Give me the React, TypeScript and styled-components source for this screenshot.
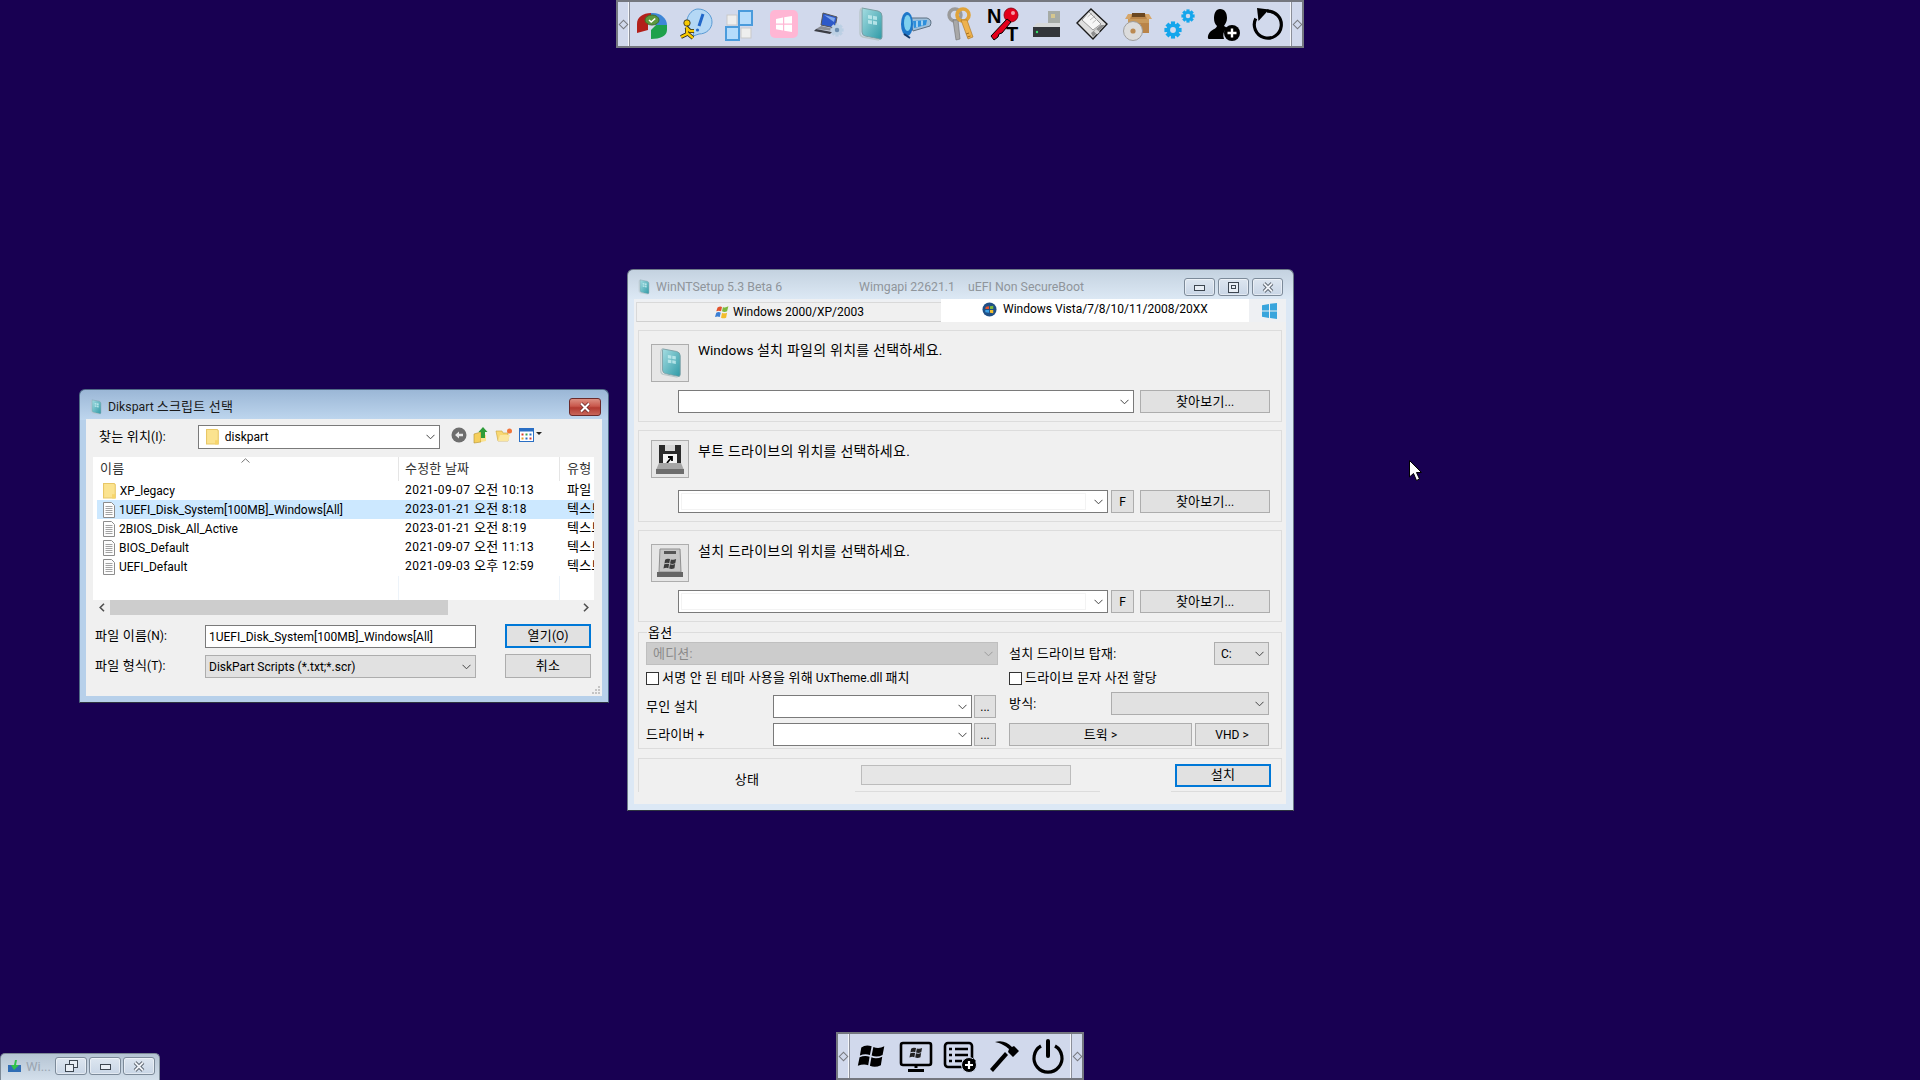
import * as React from "react";
import styled, { createGlobalStyle } from "styled-components";

const GlobalStyle = createGlobalStyle`
  html, body {
    margin: 0;
    padding: 0;
    background: #180052;
  }
  body {
    font-family: Roboto, "Noto Sans CJK KR", sans-serif;
    font-size: 12px;
    color: #000;
  }
  * {
    box-sizing: border-box;
  }
`;

const Desktop = styled.div`
  position: relative;
  width: 1920px;
  height: 1080px;
  overflow: hidden;
  background: #180052;
`;

// hangul runs sit a little larger than the latin around them
const Hangul = styled.span`
  font-size: 13px;
  letter-spacing: 0.2px;
  line-height: 1;
`;

const Txt = ({ children }: { children: string }) => (
  <span>
    {children.split(/([\uAC00-\uD7A3]+(?:\s+[\uAC00-\uD7A3]+)*)/).map((part, i) =>
      i % 2 === 1 ? <Hangul key={i}>{part}</Hangul> : part
    )}
  </span>
);

/* ---------- floating toolbars ---------- */

const Bar = styled.div<{ $x: number; $y: number; $w: number }>`
  position: absolute;
  left: ${(p) => p.$x}px;
  top: ${(p) => p.$y}px;
  width: ${(p) => p.$w}px;
  height: 48px;
  display: flex;
  align-items: center;
  background: #d1d9ec;
  border: 2px solid #74777f;
`;

const Grip = styled.div`
  width: 10px;
  height: 100%;
  flex: none;
  display: flex;
  align-items: center;
  justify-content: center;
  &::before {
    content: "";
    width: 5px;
    height: 5px;
    border: 1px solid #77797f;
    transform: rotate(45deg);
  }
`;

const GripLine = styled.div`
  width: 2px;
  height: 100%;
  flex: none;
  background: linear-gradient(90deg, #f4f6fb 50%, #8b8f99 50%);
`;

const BarIcons = styled.div`
  flex: 1;
  display: flex;
  align-items: center;
  justify-content: center;
  gap: 8px;
  position: relative;
`;

const BarIcon = styled.svg`
  width: 36px;
  height: 36px;
  flex: none;
  display: block;
`;

const MenuArrow = styled.span`
  position: absolute;
  left: 123px;
  top: 20px;
  width: 0;
  height: 0;
  border-left: 3px solid #000;
  border-top: 3px solid transparent;
  border-bottom: 3px solid transparent;
`;

/* ---------- windows ---------- */

const Frame = styled.div<{ $active?: boolean }>`
  position: absolute;
  display: flex;
  flex-direction: column;
  padding: 0 6px 6px;
  border-radius: 6px 6px 0 0;
  border: 1px solid ${(p) => (p.$active ? "#4f6a86" : "#6d7a88")};
  border-bottom-color: #2e3440;
  background: ${(p) =>
    p.$active
      ? "linear-gradient(180deg, #9bb7d6 0, #bed6ee 30px, #b7d0ea 30px)"
      : "linear-gradient(180deg, #c4d2e0 0, #dde9f5 30px, #dce8f5 30px)"};
`;

const DialogFrame = styled(Frame)`
  left: 79px;
  top: 389px;
  width: 530px;
  height: 314px;
`;

const SetupFrame = styled(Frame)`
  left: 627px;
  top: 269px;
  width: 667px;
  height: 542px;
  padding-right: 7px;
`;

const TitleBar = styled.div`
  height: 29px;
  flex: none;
  display: flex;
  align-items: center;
  gap: 6px;
  padding: 5px 0 0 4px;
  position: relative;
`;

const TitleIcon = styled.svg`
  width: 12px;
  height: 16px;
  flex: none;
`;

const TitleText = styled.span<{ $dim?: boolean; $gap?: number }>`
  font-size: 12.3px;
  white-space: nowrap;
  color: ${(p) => (p.$dim ? "#8f959b" : "#1a1a1a")};
  margin-left: ${(p) => p.$gap ?? 0}px;
`;

const CaptionGroup = styled.div`
  margin-left: auto;
  margin-right: 3px;
  display: flex;
  gap: 3px;
`;

const Caption = styled.div<{ $w: number }>`
  width: ${(p) => p.$w}px;
  height: 18px;
  display: flex;
  align-items: center;
  justify-content: center;
  border: 1px solid #7c8a99;
  border-radius: 3px;
  background: linear-gradient(180deg, #dde6f0, #c9d6e6);
  box-shadow: inset 0 0 0 1px rgba(255, 255, 255, 0.45);
`;

const CloseCaption = styled.div`
  width: 32px;
  height: 18px;
  margin-left: auto;
  margin-right: 1px;
  display: flex;
  align-items: center;
  justify-content: center;
  border: 1px solid #6b2a2a;
  border-radius: 3px;
  background: linear-gradient(180deg, #dc8f82 0, #c9584c 45%, #b23a30 55%, #c8665a 100%);
`;

const Client = styled.div`
  flex: 1;
  display: flex;
  flex-direction: column;
  background: #f0f0f0;
  position: relative;
  min-height: 0;
`;

/* ---------- shared controls ---------- */

const Btn = styled.div<{ $w?: number; $primary?: boolean }>`
  ${(p) => (p.$w ? `width: ${p.$w}px;` : "flex: 1;")}
  height: 23px;
  flex-shrink: 0;
  display: flex;
  align-items: center;
  justify-content: center;
  background: #e1e1e1;
  border: ${(p) => (p.$primary ? "2px solid #0078d7" : "1px solid #adadad")};
  white-space: nowrap;
`;

const ComboBox = styled.div<{ $w?: number; $tone?: "white" | "gray" | "off" }>`
  ${(p) => (p.$w ? `width: ${p.$w}px; flex: none;` : "flex: 1;")}
  height: 23px;
  display: flex;
  align-items: center;
  padding: 0 4px 0 6px;
  white-space: nowrap;
  background: ${(p) =>
    p.$tone === "off" ? "#cccccc" : p.$tone === "gray" ? "#e1e1e1" : "#ffffff"};
  border: 1px solid
    ${(p) => (p.$tone === "off" ? "#bfbfbf" : p.$tone === "gray" ? "#adadad" : "#7a7a7a")};
  color: ${(p) => (p.$tone === "off" ? "#8a8a8a" : "#000")};
`;

const ComboInset = styled.div`
  flex: 1;
  align-self: stretch;
  margin: 2px 8px 2px -4px;
  border: 1px solid #f3f3f3;
`;

const ComboLabel = styled.span`
  flex: 1;
  display: flex;
  align-items: center;
  gap: 6px;
`;

const ChevronSvg = styled.svg<{ $faint?: boolean }>`
  width: 9px;
  height: 6px;
  flex: none;
  margin-left: auto;
  opacity: ${(p) => (p.$faint ? 0.35 : 1)};
`;

const Chevron = ({ faint }: { faint?: boolean }) => (
  <ChevronSvg $faint={faint} viewBox="0 0 9 6">
    <path d="M.5 .8 4.500 4.800 8.500 .8" fill="none" stroke="#444" strokeWidth="1" />
  </ChevronSvg>
);

const FolderGlyph = ({ size = 16 }: { size?: number }) => (
  <svg width={size * 0.8} height={size} viewBox="0 0 12 15" style={{ flex: "none" }}>
    <path d="M.5 .5h10l1 1v12.500h-11z" fill="#fbe38f" stroke="#e8c766" />
    <path d="M8.500 10.500h3v4h-3z" fill="#f7d56a" />
  </svg>
);

const DocGlyph = () => (
  <svg width="12" height="16" viewBox="0 0 12 16" style={{ flex: "none" }}>
    <path d="M.5 .5h8l3 3v12h-11z" fill="#fdfdfd" stroke="#8c8c8c" />
    <path d="M2.500 4.500h7M2.500 6.500h7M2.500 8.500h7M2.500 10.500h7M2.500 12.500h7" stroke="#a3a3a3" />
  </svg>
);

/* ---------- file dialog ---------- */

const LookInRow = styled.div`
  display: flex;
  align-items: center;
  height: 24px;
  margin-top: 6px;
  padding-left: 13px;
`;

const LookInLabel = styled.span`
  width: 99px;
  flex: none;
`;

const DirCombo = styled(ComboBox)`
  width: 242px;
  height: 24px;
  flex: none;
  padding-left: 7px;
`;

const ToolStrip = styled.div`
  display: flex;
  align-items: center;
  gap: 6px;
  margin: -4px 0 0 11px;
`;

const FileList = styled.div`
  height: 158px;
  margin: 8px 8px 0 7px;
  background: #fff;
  display: flex;
  flex-direction: column;
  position: relative;
  overflow: hidden;
`;

const Columns = "306px 161px 34px";

const HeaderRow = styled.div`
  display: grid;
  grid-template-columns: ${Columns};
  height: 24px;
  flex: none;
`;

const HeadCell = styled.div<{ $pad: number; $last?: boolean }>`
  display: flex;
  align-items: center;
  padding: 0 0 1px ${(p) => p.$pad}px;
  border-right: ${(p) => (p.$last ? "none" : "1px solid #e5e5e5")};
  white-space: nowrap;
  overflow: hidden;
  color: #333;
`;

const SortCaret = styled.svg`
  position: absolute;
  left: 148px;
  top: 1px;
  width: 9px;
  height: 5px;
`;

const FileRow = styled.div<{ $selected?: boolean }>`
  display: grid;
  grid-template-columns: 302px 161px 34px;
  margin-left: 4px;
  height: 19px;
  flex: none;
  background: ${(p) => (p.$selected ? "#cce8ff" : "transparent")};
`;

const NameCell = styled.div`
  display: flex;
  align-items: center;
  gap: 4px;
  padding-left: 6px;
  white-space: nowrap;
`;

const DateCell = styled.div`
  padding-left: 6px;
  line-height: 19px;
  letter-spacing: 0.5px;
  white-space: nowrap;
`;

const TypeCell = styled.div`
  padding-left: 7px;
  line-height: 19px;
  white-space: nowrap;
  overflow: hidden;
`;

const ListFiller = styled.div`
  flex: 1;
  display: grid;
  grid-template-columns: ${Columns};
  & > div {
    border-right: 1px solid #edf3f9;
  }
`;

const ScrollBar = styled.div`
  height: 15px;
  flex: none;
  display: flex;
  align-items: center;
  background: #f0f0f0;
`;

const ScrollArrow = styled.div`
  width: 17px;
  flex: none;
  display: flex;
  justify-content: center;
`;

const ScrollTrack = styled.div`
  flex: 1;
  align-self: stretch;
`;

const ScrollThumb = styled.div`
  width: 338px;
  height: 100%;
  background: #cdcdcd;
`;

const FileForm = styled.div`
  display: grid;
  grid-template-columns: 110px 271px 29px 86px;
  grid-auto-rows: 24px;
  row-gap: 6px;
  align-items: end;
  margin-top: 9px;
  padding-left: 9px;
`;

const FormLabel = styled.span`
  align-self: center;
`;

const FormField = styled(ComboBox)`
  width: 271px;
  padding: 0 4px 0 3px;
`;

const FormBtn = styled(Btn)`
  grid-column: 4;
  height: 24px;
`;

const ResizeGrip = styled.svg`
  position: absolute;
  right: 2px;
  bottom: 2px;
  width: 8px;
  height: 8px;
`;

/* ---------- setup window ---------- */

const TabStrip = styled.div`
  height: 23px;
  flex: none;
  display: flex;
  align-items: flex-end;
  padding-left: 2px;
  background: #eef0f3;
`;

const InactiveTab = styled.div`
  width: 305px;
  height: 20px;
  display: flex;
  align-items: center;
  gap: 4px;
  padding-left: 78px;
  background: #f0f0f0;
  border: 1px solid #d9d9d9;
  border-bottom-color: #d0d0d0;
  border-right: none;
`;

const ActiveTab = styled.div`
  width: 308px;
  height: 23px;
  display: flex;
  align-items: flex-start;
  gap: 6px;
  padding: 3px 0 0 41px;
  background: #fff;
`;

const TabEnd = styled.div`
  margin-left: 13px;
  align-self: center;
  display: flex;
`;

const Panel = styled.div`
  flex: 1;
  display: flex;
  flex-direction: column;
  gap: 8px;
  padding: 8px 4px 0;
`;

const SourceGroup = styled.section<{ $iconTop: number }>`
  height: 92px;
  flex: none;
  display: flex;
  flex-direction: column;
  padding: ${(p) => p.$iconTop - 1}px 11px 8px 12px;
  border: 1px solid #dcdcdc;
`;

const SourceHead = styled.div`
  display: flex;
  gap: 9px;
`;

const IconBox = styled.div`
  width: 38px;
  height: 38px;
  flex: none;
  display: flex;
  align-items: center;
  justify-content: center;
  background: #e6e6e6;
  border: 1px solid #adadad;
`;

const SourceText = styled.div<{ $top: number }>`
  margin-top: ${(p) => p.$top}px;
  font-size: 13.6px;
  line-height: 14px;
  white-space: nowrap;
  ${Hangul} {
    font-size: 14px;
    letter-spacing: 0.25px;
  }
`;

const FieldRow = styled.div`
  margin-top: auto;
  padding-left: 27px;
  display: flex;
`;

const LetterBtn = styled(Btn)`
  margin-left: 3px;
`;

const BrowseBtn = styled(Btn)`
  margin-left: 6px;
`;

const OptionsGroup = styled.section`
  margin-top: 2px;
  height: 117px;
  flex: none;
  position: relative;
  display: grid;
  grid-template-columns: 352px 260px;
  column-gap: 11px;
  padding: 9px 0 0 7px;
  border: 1px solid #dcdcdc;
`;

const Legend = styled.span`
  position: absolute;
  left: 8px;
  top: -8px;
  padding: 0 1px;
  line-height: 16px;
  background: #f0f0f0;
`;

const OptionsColumn = styled.div`
  display: flex;
  flex-direction: column;
`;

const CheckRow = styled.label<{ $h: number; $mb: number }>`
  height: ${(p) => p.$h}px;
  margin-bottom: ${(p) => p.$mb}px;
  flex: none;
  display: flex;
  align-items: center;
  gap: 3px;
  white-space: nowrap;
`;

const CheckSquare = styled.span`
  width: 13px;
  height: 13px;
  flex: none;
  background: #fff;
  border: 1px solid #333;
`;

const OptionRow = styled.div<{ $mt?: number }>`
  display: flex;
  align-items: center;
  flex: none;
  height: 23px;
  margin-top: ${(p) => p.$mt ?? 0}px;
`;

const RowLabel = styled.span<{ $w?: number }>`
  ${(p) => (p.$w ? `width: ${p.$w}px; flex: none;` : "flex: 1;")}
  white-space: nowrap;
`;

const DotsBtn = styled(Btn)`
  margin-left: 2px;
  align-items: flex-end;
  padding-bottom: 3px;
`;

const SplitBtns = styled.div`
  flex: 1;
  display: flex;
  gap: 3px;
`;

const StatusGroup = styled.section`
  margin-top: 1px;
  height: 34px;
  flex: none;
  display: flex;
  border-top: 1px solid #dcdcdc;
  border-left: 1px solid #dcdcdc;
  border-right: 1px solid #dcdcdc;
`;

const StatusCell = styled.div<{ $w: number; $line?: boolean }>`
  width: ${(p) => p.$w}px;
  flex: none;
  display: flex;
  align-items: center;
  justify-content: center;
  border-bottom: ${(p) => (p.$line ? "1px solid #dcdcdc" : "none")};
`;

const StatusLabel = styled.span`
  margin-top: 9px;
`;

const ProgressTrack = styled.div`
  width: 210px;
  height: 20px;
  margin: 0 0 0 -24px;
  background: #e6e6e6;
  border: 1px solid #bcbcbc;
`;

const InstallCell = styled(StatusCell)`
  justify-content: flex-start;
  padding-left: 4px;
`;

/* ---------- mini taskbar window and pointer ---------- */

const MiniWindow = styled.div`
  position: absolute;
  left: 0;
  top: 1053px;
  width: 160px;
  height: 27px;
  display: flex;
  align-items: center;
  padding: 0 4px 2px 7px;
  border-radius: 5px 5px 0 0;
  border: 1px solid #7d8a97;
  border-bottom: none;
  background: linear-gradient(180deg, #b5c4d3, #d3dfeb);
`;

const MiniTitle = styled.span`
  margin-left: 5px;
  color: #9aa5b1;
  font-size: 13px;
`;

const MiniCaptions = styled.div`
  margin-left: auto;
  display: flex;
  gap: 2px;
`;

const Pointer = styled.svg`
  position: absolute;
  left: 1409px;
  top: 460px;
  width: 14px;
  height: 22px;
`;

/* ---------- drawings ---------- */

const Gear = ({ cx, cy, r, fill, hole }: { cx: number; cy: number; r: number; fill: string; hole: string }) => (
  <g>
    {[0, 45, 90, 135].map((a) => (
      <rect
        key={a}
        x={cx - r * 0.32}
        y={cy - r * 1.32}
        width={r * 0.64}
        height={r * 2.64}
        fill={fill}
        transform={`rotate(${a} ${cx} ${cy})`}
      />
    ))}
    <circle cx={cx} cy={cy} r={r} fill={fill} />
    <circle cx={cx} cy={cy} r={r * 0.45} fill={hole} />
  </g>
);

const WinFlag = ({ x, y, s, fill }: { x: number; y: number; s: number; fill: string }) => (
  <g transform={`translate(${x} ${y}) scale(${s})`} fill={fill}>
    <path d="M2 3Q6 0 11 2L9.500 9.500Q5 8 .8 10Z" />
    <path d="M12.500 2.500Q17 4.500 22 2L20.500 9.500Q15.500 12 11 10Z" />
    <path d="M.5 11.500Q5 9.500 9.200 11L8 18.500Q4 17 -1 19Z" />
    <path d="M10.800 11.500Q15 13.500 20.200 11L19 18.500Q14 21 9.500 19Z" />
  </g>
);

const BookShape = ({ id }: { id: string }) => (
  <g>
    <defs>
      <linearGradient id={id} x1="0" y1="0" x2="1" y2="1">
        <stop offset="0" stopColor="#a5dde2" />
        <stop offset="1" stopColor="#2f9aa6" />
      </linearGradient>
    </defs>
    <path d="M8 2 24 5Q28 6 28 10V31Q28 34 25 33L11 30Q8 29 8 26Z" fill={`url(#${id})`} stroke="#7a9ea3" />
    <path d="M8 2Q6 3 6 6V27Q6 30 9 31L25 34" fill="none" stroke="#b9c7c9" strokeWidth="1.400" />
    <path d="M14 9l4 .6v3.600l-4-.6zM19 9.800l4 .6V14l-4-.6zM14 14l4 .6v3.600l-4-.6zM19 14.800l4 .6V19l-4-.6z" fill="#c7eef0" opacity=".8" />
  </g>
);

const TOP_ICONS: React.ReactNode[] = [
  <>
    <path d="M17 7C9 7 3 11 3 18V27L14 24V18L17 17Z" fill="#b3201b" />
    <path d="M17 7C26 6 33 12 33 19L22 19 17 17Z" fill="#3e86d6" />
    <path d="M33 19V24C33 30 26 33 17 33V24L22 19Z" fill="#1ea14b" />
    <ellipse cx="18" cy="14" rx="7" ry="5" fill="#5c9a3d" stroke="#3e6e2a" />
    <path d="M15 14l2.200 2 4-3.500" fill="none" stroke="#fff" strokeWidth="1.600" />
  </>,
  <>
    <path d="M20 3C28 3 34 9 34 16C34 23 28 28 21 28L15 30 16 26C11 24 8 19 9 14C10 8 15 3 20 3Z" fill="#b4d8f5" stroke="#5a9bd4" />
    <path d="M25 8 21 20" stroke="#2167c9" strokeWidth="3" />
    <circle cx="19.500" cy="24" r="1.600" fill="#2167c9" />
    <circle cx="9" cy="17" r="3.200" fill="#f8c900" stroke="#222" strokeWidth=".8" />
    <path d="M8 21 12 25 16 25M9 22 9 28 3 31M9 27 15 32" fill="none" stroke="#222" strokeWidth="4" />
    <path d="M8 21 12 25 16 25M9 22 9 28 3 31M9 27 15 32" fill="none" stroke="#f8c900" strokeWidth="2.400" />
  </>,
  <>
    <rect x="5" y="9" width="10" height="10" fill="#eeeeee" stroke="#c9c9c9" />
    <rect x="17" y="5" width="13" height="14" fill="#b6dcfb" stroke="#4a9bdc" strokeWidth="2" />
    <rect x="4" y="21" width="13" height="13" fill="#b6dcfb" stroke="#4a9bdc" strokeWidth="2" />
    <rect x="19" y="22" width="10" height="10" fill="#eeeeee" stroke="#c9c9c9" />
  </>,
  <>
    <rect x="4" y="4" width="28" height="28" rx="5" fill="#ffb6d4" />
    <path d="M10 13 17 11.500V17.500H10ZM18.200 11.300 26 10V17.500H18.200ZM10 18.700H17V24.500L10 23.200ZM18.200 18.700H26V26L18.200 24.800Z" fill="#fff" />
  </>,
  <>
    <path d="M13 7 27 11 25 22 11 19Z" fill="#2d59c9" stroke="#555" />
    <path d="M14 9 25 12 24 16Z" fill="#7fa7ee" />
    <path d="M11 20 25 23 23 25 6 23Z" fill="#8a8d94" />
    <path d="M6 23 22 26 20 28 4 25Z" fill="#3b3d44" />
    <Gear cx={27} cy={24} r={5} fill="#bcd0e4" hole="#6c8db0" />
  </>,
  <BookShape id="bookTop" />,
  <>
    <path d="M11 12 29 12Q35 14 32 20L15 25Z" fill="#9fc0dc" stroke="#5d6f80" />
    <path d="M15 15 29 14 28 19 16 22Z" fill="#2d8fdc" />
    <path d="M19 15v6M24 14.500v5" stroke="#cfeaf8" strokeWidth="1.400" />
    <ellipse cx="9" cy="18" rx="6" ry="12" fill="#1d77c9" />
    <ellipse cx="9.500" cy="17" rx="3.500" ry="8" fill="#7ed0ee" />
    <path d="M6 28 12 32" stroke="#123a6b" strokeWidth="2" />
  </>,
  <>
    <circle cx="13" cy="9" r="6" fill="none" stroke="#9a9a9a" strokeWidth="3.400" />
    <path d="M11 14 14 34 18 33 16 14Z" fill="#a8a8a8" stroke="#6f6f6f" strokeWidth=".6" />
    <circle cx="21" cy="9" r="6" fill="none" stroke="#e0a33a" strokeWidth="3.600" />
    <path d="M19 14 26 33 31 31 25 14Z" fill="#eeb24d" stroke="#a66f1e" strokeWidth=".6" />
    <path d="M27 27l-3 1M28.500 30l-3 1" stroke="#a66f1e" />
  </>,
  <>
    <text x="1" y="17" fontFamily="Liberation Sans" fontWeight="700" fontSize="20" fill="#000">N</text>
    <text x="20" y="35" fontFamily="Liberation Sans" fontWeight="700" fontSize="20" fill="#000">T</text>
    <circle cx="25" cy="9" r="7" fill="#e3001b" stroke="#7d0010" strokeWidth=".8" />
    <circle cx="27" cy="7" r="2" fill="#f79aa5" />
    <path d="M21 13 5 30 8 34 12 31 13 28 16 27 25 16Z" fill="#e3001b" stroke="#000" strokeWidth="1" />
  </>,
  <>
    <rect x="18" y="5" width="12" height="12" fill="#a6aba6" />
    <rect x="21" y="8" width="4" height="4" fill="#d6c78f" />
    <path d="M7 17H30V21H3Z" fill="#d7d9d9" />
    <rect x="3" y="21" width="27" height="10" fill="#33363a" />
    <circle cx="7" cy="26" r="1.200" fill="#35e26a" />
  </>,
  <>
    <path d="M17 3 33 18 19 33 3 17Z" fill="#dedede" stroke="#1a1a1a" strokeWidth="1.400" />
    <path d="M15 6 27 18 19 24 8 14Z" fill="#f6f6f6" stroke="#9a9a9a" />
    <path d="M13.500 11 18 7M16 14 21 10M18.500 17 23 13" stroke="#bdbdbd" />
    <path d="M27 19 31 19 19 31 17 27Z" fill="#8e8e8e" />
    <path d="M22 23l4 3-3 2.500-3-3z" fill="#d8d8d8" />
  </>,
  <>
    <path d="M10 8H31V27H10Z" fill="#b98449" />
    <path d="M10 8 7 13H12L14 8ZM31 8 34 13H29L27 8Z" fill="#d6a66a" />
    <path d="M14 7H27V11H14Z" fill="#6b4721" />
    <path d="M10 13H31V17H10Z" fill="#c99a5d" />
    <circle cx="15" cy="25" r="9.500" fill="#dcdcdc" stroke="#9f9f9f" />
    <circle cx="15" cy="25" r="2.600" fill="#bb8a52" />
  </>,
  <>
    <Gear cx={11} cy={24} r={6.500} fill="#14a6ec" hole="#d1d9ec" />
    <Gear cx={26} cy={10} r={5} fill="#14a6ec" hole="#d1d9ec" />
  </>,
  <>
    <path d="M14 3C19 3 21 7 21 12C21 16 19 18 18 20C20 21 21 22 21 22A10 10 0 0 0 18 33H3C1 33 2 28 4 26C7 23 10 23 11 20C9 18 8 16 8 12C8 7 10 3 14 3Z" fill="#000" />
    <circle cx="26" cy="27" r="8" fill="#000" />
    <path d="M26 22.500V31.500M21.500 27H30.500" stroke="#fff" strokeWidth="2.400" />
  </>,
  <>
    <path d="M17 5.200A13.500 13.500 0 1 1 5.800 12.500" fill="none" stroke="#000" strokeWidth="3.200" />
    <path d="M7 2 19 3.500 8.500 15Z" fill="#000" />
  </>,
];

const BOTTOM_ICONS: React.ReactNode[] = [
  <WinFlag x={5} y={6} s={1.150} fill="#000" />,
  <>
    <rect x="3" y="5" width="30" height="22" rx="2" fill="none" stroke="#000" strokeWidth="2.600" />
    <WinFlag x={12} y={9} s={0.550} fill="#222" />
    <path d="M18 27V30M10 32.500H26" stroke="#000" strokeWidth="3" />
  </>,
  <>
    <rect x="3" y="5" width="27" height="24" rx="3" fill="none" stroke="#000" strokeWidth="2.600" />
    <path d="M7 11h3M7 17h3M7 23h3M13 11H26M13 17H26M13 23H20" stroke="#000" strokeWidth="2.600" />
    <circle cx="27" cy="27" r="7.500" fill="#000" stroke="#d1d9ec" strokeWidth="1" />
    <path d="M27 23V31M23 27H31" stroke="#fff" strokeWidth="2.200" />
  </>,
  <>
    <path d="M4 31 19 14 22 17 7 34Z" fill="#000" />
    <path d="M9 4C16 2 21 4 26 9L28 8 33 13 27 19 22 14 23 11C20 8 14 5 9 4Z" fill="#000" />
  </>,
  <>
    <path d="M11 8A14 14 0 1 0 25 8" fill="none" stroke="#000" strokeWidth="3.200" />
    <path d="M18 3V18" stroke="#000" strokeWidth="4" strokeLinecap="round" />
  </>,
];

const IconBar = ({ x, y, w, icons, menu }: { x: number; y: number; w: number; icons: React.ReactNode[]; menu?: boolean }) => (
  <Bar $x={x} $y={y} $w={w}>
    <Grip />
    <GripLine />
    <BarIcons>
      {icons.map((icon, i) => (
        <BarIcon key={i} viewBox="0 0 36 36">
          {icon}
        </BarIcon>
      ))}
      {menu && <MenuArrow />}
    </BarIcons>
    <GripLine />
    <Grip />
  </Bar>
);

const AppGlyph = ({ id }: { id: string }) => (
  <TitleIcon viewBox="4 0 26 36">
    <BookShape id={id} />
  </TitleIcon>
);

const FILES = [
  { name: "XP_legacy", date: "2021-09-07 오전 10:13", type: "파일", folder: true },
  { name: "1UEFI_Disk_System[100MB]_Windows[All]", date: "2023-01-21 오전 8:18", type: "텍스트", selected: true },
  { name: "2BIOS_Disk_All_Active", date: "2023-01-21 오전 8:19", type: "텍스트" },
  { name: "BIOS_Default", date: "2021-09-07 오전 11:13", type: "텍스트" },
  { name: "UEFI_Default", date: "2021-09-03 오후 12:59", type: "텍스트" },
];

const MinGlyph = () => (
  <svg width="11" height="7" viewBox="0 0 11 7">
    <rect x=".5" y="1.500" width="10" height="5" fill="#e8eef5" stroke="#3d4650" />
  </svg>
);
const MaxGlyph = () => (
  <svg width="11" height="11" viewBox="0 0 11 11">
    <rect x=".5" y=".5" width="10" height="10" fill="#e8eef5" stroke="#3d4650" />
    <rect x="3.500" y="3.500" width="4" height="3" fill="none" stroke="#3d4650" />
  </svg>
);
const CloseGlyph = ({ light }: { light?: boolean }) => (
  <svg width="12" height="11" viewBox="0 0 12 11">
    <path d="M2 1.500 10 9.500M10 1.500 2 9.500" stroke={light ? "#6b2a2a" : "#3d4650"} strokeWidth="3.600" />
    <path d="M2 1.500 10 9.500M10 1.500 2 9.500" stroke={light ? "#ffffff" : "#eef2f7"} strokeWidth="2" />
  </svg>
);
const RestoreGlyph = () => (
  <svg width="13" height="12" viewBox="0 0 13 12">
    <rect x="4.500" y=".5" width="8" height="7" fill="#e8eef5" stroke="#3d4650" />
    <rect x=".5" y="4.500" width="8" height="7" fill="#e8eef5" stroke="#3d4650" />
  </svg>
);

const SetupRow = ({ children, text, iconTop, labelTop, letter }: { children: React.ReactNode; text: string; iconTop: number; labelTop: number; letter?: boolean }) => (
  <SourceGroup $iconTop={iconTop}>
    <SourceHead>
      <IconBox>{children}</IconBox>
      <SourceText $top={labelTop}>
        <Txt>{text}</Txt>
      </SourceText>
    </SourceHead>
    <FieldRow>
      <ComboBox>
        {letter && <ComboInset />}
        <Chevron />
      </ComboBox>
      {letter && <LetterBtn $w={23}>F</LetterBtn>}
      <BrowseBtn $w={130}>
        <Txt>찾아보기...</Txt>
      </BrowseBtn>
    </FieldRow>
  </SourceGroup>
);

const App = () => (
  <Desktop>
    <GlobalStyle />

    <IconBar x={616} y={0} w={688} icons={TOP_ICONS} />
    <IconBar x={836} y={1032} w={248} icons={BOTTOM_ICONS} menu />

    <DialogFrame $active>
      <TitleBar>
        <AppGlyph id="bookDlg" />
        <TitleText>
          <Txt>Dikspart 스크립트 선택</Txt>
        </TitleText>
        <CloseCaption>
          <CloseGlyph light />
        </CloseCaption>
      </TitleBar>
      <Client>
        <LookInRow>
          <LookInLabel>
            <Txt>찾는 위치(I):</Txt>
          </LookInLabel>
          <DirCombo>
            <ComboLabel>
              <FolderGlyph />
              diskpart
            </ComboLabel>
            <Chevron />
          </DirCombo>
          <ToolStrip>
            <svg width="16" height="16" viewBox="0 0 16 16">
              <circle cx="8" cy="8" r="7.500" fill="#6e6e6e" />
              <path d="M4 8 8 4.500V6.800H12V9.200H8V11.500Z" fill="#e9e9e9" />
            </svg>
            <svg width="16" height="18" viewBox="0 0 16 18">
              <path d="M1 8 8 6V16L1 17Z" fill="#f5cf5d" stroke="#b3912e" strokeWidth=".6" />
              <path d="M8 6 13 9V15L8 16Z" fill="#fbe28f" />
              <path d="M10 1 14.500 6H12V12H8V6H5.500Z" fill="#2f9c3a" />
            </svg>
            <svg width="18" height="16" viewBox="0 0 18 16">
              <path d="M1 4H7L8 6H13V14H3Z" fill="#f8d873" stroke="#c9a33b" strokeWidth=".6" />
              <path d="M3 14 5 8H15L13 14Z" fill="#fbe79f" />
              <circle cx="14.500" cy="4" r="2.500" fill="#f1763a" />
            </svg>
            <svg width="24" height="14" viewBox="0 0 24 14">
              <rect x=".5" y=".5" width="14" height="13" fill="#fff" stroke="#2a6fc4" />
              <rect x=".5" y=".5" width="14" height="3" fill="#2a6fc4" />
              <path d="M2.500 5.500h2v2h-2z" fill="#d93a2b" />
              <path d="M6.500 5.500h2v2h-2z" fill="#3ba24a" />
              <path d="M10.500 5.500h2v2h-2z" fill="#2a6fc4" />
              <path d="M2.500 9.500h2v2h-2z" fill="#e6a21d" />
              <path d="M6.500 9.500h2v2h-2z" fill="#2a6fc4" />
              <path d="M10.500 9.500h2v2h-2z" fill="#d93a2b" />
              <path d="M17 4H23L20 7Z" fill="#222" />
            </svg>
          </ToolStrip>
        </LookInRow>

        <FileList>
          <SortCaret viewBox="0 0 9 5">
            <path d="M.5 4.500 4.500 .8 8.500 4.500" fill="none" stroke="#777" />
          </SortCaret>
          <HeaderRow>
            <HeadCell $pad={7}>
              <Txt>이름</Txt>
            </HeadCell>
            <HeadCell $pad={6}>
              <Txt>수정한 날짜</Txt>
            </HeadCell>
            <HeadCell $pad={7} $last>
              <Txt>유형</Txt>
            </HeadCell>
          </HeaderRow>
          {FILES.map((f) => (
            <FileRow key={f.name} $selected={f.selected}>
              <NameCell>
                {f.folder ? <FolderGlyph /> : <DocGlyph />}
                {f.name}
              </NameCell>
              <DateCell>
                <Txt>{f.date}</Txt>
              </DateCell>
              <TypeCell>
                <Txt>{f.type}</Txt>
              </TypeCell>
            </FileRow>
          ))}
          <ListFiller>
            <div />
            <div />
          </ListFiller>
          <ScrollBar>
            <ScrollArrow>
              <svg width="6" height="9" viewBox="0 0 6 9">
                <path d="M5 .8 1.200 4.500 5 8.200" fill="none" stroke="#505050" strokeWidth="1.600" />
              </svg>
            </ScrollArrow>
            <ScrollTrack>
              <ScrollThumb />
            </ScrollTrack>
            <ScrollArrow>
              <svg width="6" height="9" viewBox="0 0 6 9">
                <path d="M1 .8 4.800 4.500 1 8.200" fill="none" stroke="#505050" strokeWidth="1.600" />
              </svg>
            </ScrollArrow>
          </ScrollBar>
        </FileList>

        <FileForm>
          <FormLabel>
            <Txt>파일 이름(N):</Txt>
          </FormLabel>
          <FormField>1UEFI_Disk_System[100MB]_Windows[All]</FormField>
          <FormBtn $primary>
            <Txt>열기(O)</Txt>
          </FormBtn>
          <FormLabel>
            <Txt>파일 형식(T):</Txt>
          </FormLabel>
          <FormField $tone="gray">
            DiskPart Scripts (*.txt;*.scr)
            <Chevron />
          </FormField>
          <FormBtn>
            <Txt>취소</Txt>
          </FormBtn>
        </FileForm>

        <ResizeGrip viewBox="0 0 8 8">
          <path d="M6 0h2v2H6zM3 3h2v2H3zM6 3h2v2H6zM0 6h2v2H0zM3 6h2v2H3zM6 6h2v2H6z" fill="#c4c4c4" />
        </ResizeGrip>
      </Client>
    </DialogFrame>

    <SetupFrame>
      <TitleBar>
        <AppGlyph id="bookSetup" />
        <TitleText $dim>WinNTSetup 5.3 Beta 6</TitleText>
        <TitleText $dim $gap={71}>Wimgapi 22621.1</TitleText>
        <TitleText $dim $gap={7}>uEFI Non SecureBoot</TitleText>
        <CaptionGroup>
          <Caption $w={31}>
            <MinGlyph />
          </Caption>
          <Caption $w={31}>
            <MaxGlyph />
          </Caption>
          <Caption $w={31}>
            <CloseGlyph />
          </Caption>
        </CaptionGroup>
      </TitleBar>
      <Client>
        <TabStrip>
          <InactiveTab>
            <svg width="14" height="14" viewBox="0 0 22 22" style={{ flex: "none" }}>
              <path d="M4 4Q8 1 11 3L9.500 10Q6 8 2 10Z" fill="#e2532d" />
              <path d="M12.500 3Q16 5 21 2L19 10Q15 12 11 10Z" fill="#7db93d" />
              <path d="M2 12Q6 10 9 12L7.500 19Q4 17 0 19Z" fill="#3b7fd4" />
              <path d="M11 12Q14 14 19 12L17.500 20Q13 22 9.500 20Z" fill="#f3bd2c" />
            </svg>
            Windows 2000/XP/2003
          </InactiveTab>
          <ActiveTab>
            <svg width="15" height="15" viewBox="0 0 16 16" style={{ flex: "none" }}>
              <circle cx="8" cy="8" r="7.500" fill="#1f4f86" />
              <path d="M4 5 7.500 4.500V7.500H3.500Z" fill="#e2532d" />
              <path d="M8.500 4.500 12 4V7.500H8.500Z" fill="#7db93d" />
              <path d="M3.500 8.500H7.500V11.500L3.500 11Z" fill="#3b9fe4" />
              <path d="M8.500 8.500H12V12L8.500 11.500Z" fill="#f3bd2c" />
            </svg>
            Windows Vista/7/8/10/11/2008/20XX
          </ActiveTab>
          <TabEnd>
            <svg width="15" height="16" viewBox="0 0 15 16">
              <path d="M0 2.200 7 1V7.500H0ZM8 .8 15 0V7.500H8ZM0 8.500H7V15L0 13.800ZM8 8.500H15V16L8 15Z" fill="#39a5dc" />
            </svg>
          </TabEnd>
        </TabStrip>

        <Panel>
          <SetupRow text="Windows 설치 파일의 위치를 선택하세요." iconTop={14} labelTop={-1}>
            <svg width="23" height="32" viewBox="4 0 26 36">
              <BookShape id="bookBox" />
            </svg>
          </SetupRow>
          <SetupRow text="부트 드라이브의 위치를 선택하세요." iconTop={10} labelTop={4} letter>
            <svg width="32" height="32" viewBox="0 0 32 32">
              <path d="M5 2H27V22H5Z" fill="#2b2b2b" />
              <rect x="11" y="2" width="10" height="6" fill="#d6d6d6" />
              <rect x="9" y="11" width="14" height="11" fill="#f4f4f4" />
              <path d="M13 20 17 15M14 14H18V18" fill="none" stroke="#000" strokeWidth="1.800" />
              <path d="M5 20 2 27V31H30V27L27 20Z" fill="#a6a6a6" />
              <rect x="2" y="26" width="28" height="5" fill="#6d6d6d" />
            </svg>
          </SetupRow>
          <SetupRow text="설치 드라이브의 위치를 선택하세요." iconTop={14} labelTop={0} letter>
            <svg width="32" height="32" viewBox="0 0 32 32">
              <path d="M6 2H26L27 25H5Z" fill="#c6c6c6" stroke="#8f8f8f" />
              <rect x="10" y="4" width="12" height="3" fill="#555" />
              <WinFlag x={10} y={11} s={0.550} fill="#3c3c3c" />
              <rect x="3" y="25" width="26" height="5" fill="#666" />
            </svg>
          </SetupRow>

          <OptionsGroup>
            <Legend>
              <Txt>옵션</Txt>
            </Legend>
            <OptionsColumn>
              <ComboBox $tone="off" $w={352}>
                <Txt>에디션:</Txt>
                <Chevron faint />
              </ComboBox>
              <CheckRow $h={26} $mb={4}>
                <CheckSquare />
                <Txt>서명 안 된 테마 사용을 위해 UxTheme.dll 패치</Txt>
              </CheckRow>
              <OptionRow>
                <RowLabel $w={127}>
                  <Txt>무인 설치</Txt>
                </RowLabel>
                <ComboBox $w={199}>
                  <Chevron />
                </ComboBox>
                <DotsBtn $w={22}>...</DotsBtn>
              </OptionRow>
              <OptionRow $mt={5}>
                <RowLabel $w={127}>
                  <Txt>드라이버 +</Txt>
                </RowLabel>
                <ComboBox $w={199}>
                  <Chevron />
                </ComboBox>
                <DotsBtn $w={22}>...</DotsBtn>
              </OptionRow>
            </OptionsColumn>
            <OptionsColumn>
              <OptionRow>
                <RowLabel>
                  <Txt>설치 드라이브 탑재:</Txt>
                </RowLabel>
                <ComboBox $w={55} $tone="gray">
                  C:
                  <Chevron />
                </ComboBox>
              </OptionRow>
              <CheckRow $h={26} $mb={1}>
                <CheckSquare />
                <Txt>드라이브 문자 사전 할당</Txt>
              </CheckRow>
              <OptionRow>
                <RowLabel>
                  <Txt>방식:</Txt>
                </RowLabel>
                <ComboBox $w={158} $tone="gray">
                  <Chevron />
                </ComboBox>
              </OptionRow>
              <OptionRow $mt={8}>
                <SplitBtns>
                  <Btn>
                    <Txt>트윅 &gt;</Txt>
                  </Btn>
                  <Btn $w={74}>VHD &gt;</Btn>
                </SplitBtns>
              </OptionRow>
            </OptionsColumn>
          </OptionsGroup>

          <StatusGroup>
            <StatusCell $w={216}>
              <StatusLabel>
                <Txt>상태</Txt>
              </StatusLabel>
            </StatusCell>
            <StatusCell $w={245} $line>
              <ProgressTrack />
            </StatusCell>
            <StatusCell $w={71} />
            <InstallCell $w={110} $line>
              <Btn $w={96} $primary>
                <Txt>설치</Txt>
              </Btn>
            </InstallCell>
          </StatusGroup>
        </Panel>
      </Client>
    </SetupFrame>

    <MiniWindow>
      <svg width="13" height="12" viewBox="0 0 13 12">
        <rect x="0" y="5" width="13" height="7" fill="#2f6db5" />
        <path d="M7 0 9 0 8 5H11L6 10 3 5H6Z" fill="#2fc24a" />
      </svg>
      <MiniTitle>Wi...</MiniTitle>
      <MiniCaptions>
        <Caption $w={32}>
          <RestoreGlyph />
        </Caption>
        <Caption $w={32}>
          <MinGlyph />
        </Caption>
        <Caption $w={32}>
          <CloseGlyph />
        </Caption>
      </MiniCaptions>
    </MiniWindow>

    <Pointer viewBox="0 0 14 22">
      <path d="M.5 .5V17L4.500 13.500 7.500 20.500 10.500 19 7.500 12.500H12.500Z" fill="#fff" stroke="#000" />
    </Pointer>
  </Desktop>
);

export default App;
